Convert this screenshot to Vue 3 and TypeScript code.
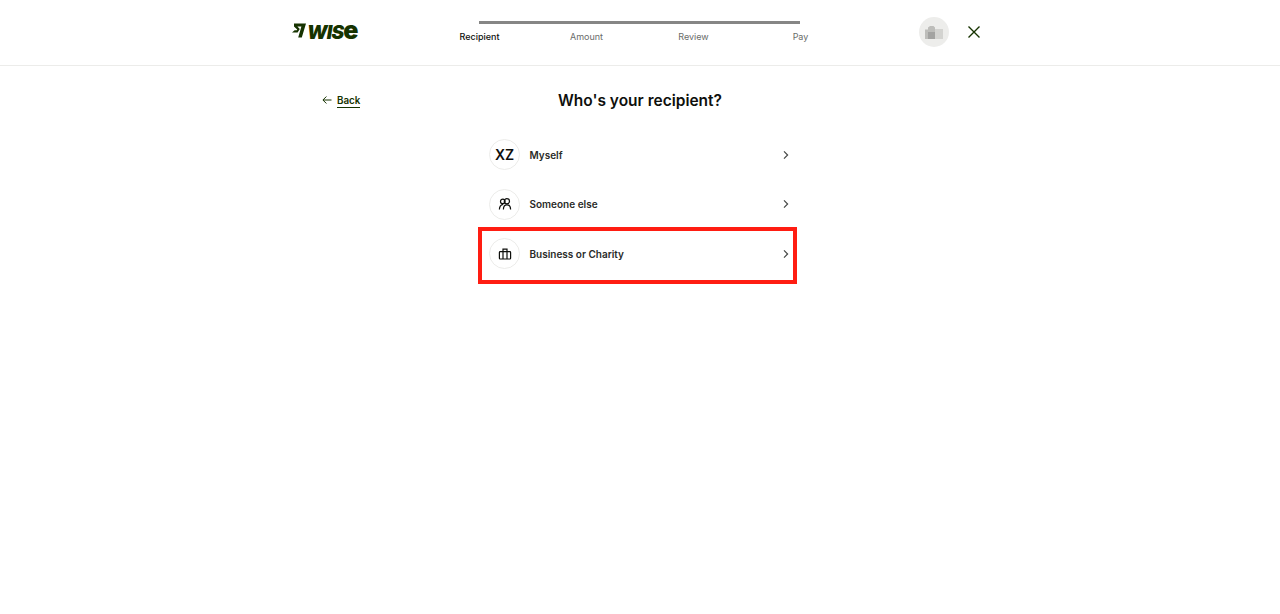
<template>
  <div class="page">
    <header class="topbar">
      <div class="topbar-inner">
        <div class="logo">
          <svg class="logo-mark" width="14" height="15" viewBox="0 0 14 15">
            <path d="M2 0.5H14L9.8 14.6H6.2L9.4 3.4H5.4L7.8 5.9L5.6 9.6H0L2.6 7.2H4.8L5.2 6.4L2 3.4Z" fill="#163300" />
          </svg>
          <span class="logo-text">WIS<span class="logo-e">e</span></span>
        </div>
        <div class="stepper">
          <div class="stepper-line"></div>
          <div v-for="(step, i) in steps" :key="step" class="step" :class="{ active: i === 0 }">{{ step }}</div>
        </div>
        <div class="actions">
          <div class="avatar">
            <svg width="18" height="13" viewBox="0 0 18 13">
              <path d="M0 3.5H3V1.5L5 0H8.5L10 1.5V3H18V13H0Z" fill="#bdbdba" />
              <rect x="10" y="3" width="8" height="10" fill="#d3d3d0" />
              <rect x="3" y="6" width="7" height="7" fill="#a3a3a1" />
            </svg>
          </div>
          <button class="close">
            <svg width="14" height="14" viewBox="0 0 14 14">
              <path d="M1.5 1.5L12.5 12.5M12.5 1.5L1.5 12.5" stroke="#163300" stroke-width="1.4" fill="none" />
            </svg>
          </button>
        </div>
      </div>
    </header>

    <main class="content">
      <div class="title-row">
        <a class="back">
          <svg class="back-arrow" width="10" height="10" viewBox="0 0 10 10">
            <path d="M9.5 5H1M4.4 1.5L0.9 5L4.4 8.5" stroke="#163300" stroke-width="1" fill="none" />
          </svg>
          <span class="back-text">Back</span>
        </a>
        <h1>Who's your recipient?</h1>
      </div>

      <div class="options">
        <div v-for="o in options" :key="o.label" class="option">
          <div class="circle">
            <span v-if="o.icon === 'xz'" class="initials">XZ</span>
            <svg v-else-if="o.icon === 'people'" width="14" height="14" viewBox="0 0 14 14" fill="none" stroke="#0e0f0c" stroke-width="1.2">
              <circle cx="4.8" cy="4.4" r="2.3" />
              <circle cx="8.9" cy="4.2" r="2.6" />
              <path d="M1.4 12.6C1.4 10.2 2.6 8 5 7.4" />
              <path d="M5.4 12.6C5.4 9.6 6.6 7.8 8.9 7.8S12.6 9.6 12.6 12.6" />
            </svg>
            <svg v-else width="14" height="14" viewBox="0 0 14 14" fill="none" stroke="#0e0f0c" stroke-width="1.2">
              <rect x="1.4" y="4.6" width="11.2" height="7.4" rx="0.8" />
              <path d="M5 4.6V2.2H9V4.6M5 4.6V12M9 4.6V12" />
            </svg>
          </div>
          <span class="option-label">{{ o.label }}</span>
          <svg class="chevron" width="8" height="10" viewBox="0 0 8 10">
            <path d="M2 1.4L5.6 5L2 8.6" stroke="#454745" stroke-width="1.2" fill="none" />
          </svg>
          <div v-if="o.marked" class="highlight"></div>
        </div>
      </div>
    </main>
  </div>
</template>

<script setup lang="ts">
const steps = ['Recipient', 'Amount', 'Review', 'Pay']

const options = [
  { label: 'Myself', icon: 'xz', marked: false },
  { label: 'Someone else', icon: 'people', marked: false },
  { label: 'Business or Charity', icon: 'briefcase', marked: true },
]
</script>

<style>
html,
body {
  background: #fff;
}
</style>

<style scoped>
.page {
  height: 614px;
  background: #fff;
  font-family: Inter, "Liberation Sans", sans-serif;
  color: #0e0f0c;
  overflow: hidden;
}

.topbar {
  height: 66px;
  box-sizing: border-box;
  border-bottom: 1px solid #ececea;
}

.topbar-inner {
  width: 696px;
  margin: 0 auto;
  display: grid;
  grid-template-columns: 1fr 428px 1fr;
}

.logo {
  display: flex;
  align-items: flex-start;
  gap: 1px;
  padding-top: 23px;
}

.logo-text {
  font-size: 19px;
  font-weight: 900;
  font-style: italic;
  color: #163300;
  letter-spacing: -0.8px;
  line-height: 14px;
}

.logo-e {
  font-size: 25px;
  font-style: normal;
  letter-spacing: 0;
}

.stepper {
  position: relative;
  display: grid;
  grid-template-columns: repeat(4, 107px);
  padding-top: 31px;
}

.stepper-line {
  position: absolute;
  top: 21px;
  left: 53px;
  width: 321px;
  height: 3px;
  background: #868685;
}

.step {
  text-align: center;
  font-size: 9px;
  line-height: 12px;
  color: #6a6c6a;
}

.step.active {
  color: #0e0f0c;
  font-weight: 500;
}

.actions {
  display: flex;
  justify-content: flex-end;
  align-items: flex-start;
  padding: 17px 4px 0 0;
  gap: 15px;
}

.avatar {
  width: 30px;
  height: 30px;
  border-radius: 50%;
  background: #ededeb;
  display: flex;
  align-items: center;
  justify-content: center;
}

.close {
  width: 20px;
  height: 30px;
  padding: 0;
  border: 0;
  background: none;
  display: flex;
  align-items: center;
  justify-content: center;
}

.content {
  width: 696px;
  margin: 0 auto;
}

.title-row {
  position: relative;
  height: 64px;
  display: flex;
  align-items: flex-start;
  justify-content: center;
}

h1 {
  margin: 0;
  font-size: 15.5px;
  font-weight: 600;
  line-height: 70px;
  color: #0e0f0c;
}

.back {
  position: absolute;
  left: 30px;
  top: 28px;
  display: flex;
  align-items: flex-start;
  gap: 5px;
}

.back-arrow {
  margin-top: 1px;
}

.back-text {
  font-size: 9.8px;
  font-weight: 600;
  line-height: 13px;
  color: #163300;
  border-bottom: 1px solid #163300;
}

.options {
  width: 318px;
  margin: 0 auto;
  transform: translateX(-2px);
}

.option {
  position: relative;
  height: 49.5px;
  display: flex;
  align-items: center;
  padding: 0 7.5px 0 10px;
}

.circle {
  width: 29px;
  height: 29px;
  border: 1px solid #ececea;
  border-radius: 50%;
  display: flex;
  align-items: center;
  justify-content: center;
  flex-shrink: 0;
}

.initials {
  font-size: 14px;
  font-weight: 600;
  color: #0e0f0c;
}

.option-label {
  flex: 1;
  margin-left: 9.5px;
  font-size: 10px;
  font-weight: 600;
  color: #2a2b28;
}

.highlight {
  position: absolute;
  left: -1px;
  right: 0;
  top: -2px;
  height: 57px;
  box-sizing: border-box;
  border: 4px solid #ff1d12;
}
</style>
